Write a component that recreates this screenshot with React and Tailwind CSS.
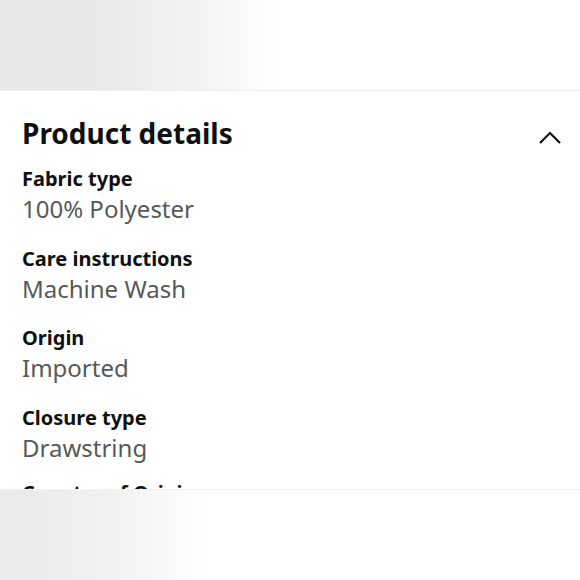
import { useState } from "react";

const detalhes = [
  ["Fabric type", "100% Polyester"],
  ["Care instructions", "Machine Wash"],
  ["Origin", "Imported"],
  ["Closure type", "Drawstring"],
];

function Item({ label, value }) {
  return (
    <div className="h-[79.5px]">
      <p className="text-[20px] leading-[28px] font-bold text-[#0f1111]">{label}</p>
      <p className="text-[24px] leading-[32px] text-[#565959]">{value}</p>
    </div>
  );
}

export default function App() {
  const [aberto, setAberto] = useState(true);

  return (
    <div
      className="w-[580px] h-[580px] overflow-hidden flex flex-col bg-white"
      style={{ fontFamily: '"Noto Sans", Arial, sans-serif' }}
    >
      {/* faixa de cima (foto borrada) */}
      <div className="h-[90px] shrink-0 bg-linear-to-r from-[#e8e8e8] from-15% via-[#f2f2f2] via-33% to-white to-48%" />

      {/* painel */}
      <div className="h-[399px] shrink-0 overflow-hidden border-t border-[#eeeeee] pl-[22px] pr-[18px]">
        <div className="flex items-center justify-between mt-[24px] mb-[14px]">
          <h2 className="text-[28px] leading-[36px] font-bold text-[#0f1111]">Product details</h2>
          <button onClick={() => setAberto(!aberto)} className="w-[24px] h-[24px] mt-[10px] flex items-center justify-center">
            <svg width="24" height="14" viewBox="0 0 24 14" fill="none">
              <path d="M2 12 L12 2 L22 12" stroke="#0f1111" strokeWidth="2.2" />
            </svg>
          </button>
        </div>

        {aberto && detalhes.map(([l, v], i) => <Item key={i} label={l} value={v} />)}

        {/* próximo item, cortado pela foto de baixo */}
        {aberto && (
          <p className="-mt-[4px] text-[20px] leading-[28px] font-bold text-[#0f1111]">Country of Origin</p>
        )}
      </div>

      {/* faixa de baixo */}
      <div className="flex-1 border-t border-[#f0f0f0] bg-linear-to-r from-[#ebebeb] from-5% via-[#f2f2f2] via-20% to-white to-36%" />
    </div>
  );
}
